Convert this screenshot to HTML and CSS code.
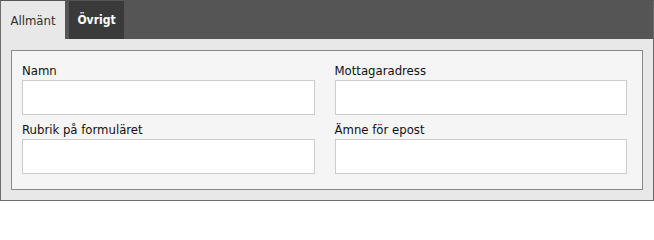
FILE: index.html
```html
<!DOCTYPE html>
<html lang="sv">
<head>
<meta charset="utf-8">
<title>Formulär</title>
<link rel="stylesheet" href="styles.css">
</head>
<body>
<div class="frame">
  <div class="tabbar">
    <div class="tab tab-active">Allmänt</div>
    <div class="tab tab-dark">Övrigt</div>
  </div>
  <div class="panel">
    <div class="fieldset">
      <div class="field">
        <label class="label">Namn</label>
        <input class="input" type="text">
      </div>
      <div class="field">
        <label class="label">Mottagaradress</label>
        <input class="input" type="text">
      </div>
      <div class="field">
        <label class="label">Rubrik på formuläret</label>
        <input class="input" type="text">
      </div>
      <div class="field">
        <label class="label">Ämne för epost</label>
        <input class="input" type="text">
      </div>
    </div>
  </div>
</div>
</body>
</html>
```

FILE: styles.css
```css
html, body {
  margin: 0;
  padding: 0;
  background: #ffffff;
}

.frame {
  box-sizing: border-box;
  width: 654px;
  height: 201px;
  border: 1px solid #6c6c6c;
  border-top-color: #555555;
  display: flex;
  flex-direction: column;
  font-family: "DejaVu Sans Condensed", "Liberation Sans", sans-serif;
  font-size: 13px;
  color: #111111;
}

.tabbar {
  height: 38px;
  background: #555555;
  display: flex;
  gap: 4px;
  flex: none;
}

.tab {
  height: 38px;
  display: flex;
  align-items: center;
  justify-content: center;
  box-sizing: border-box;
  padding: 0 6px;
  font-size: 13px;
  white-space: nowrap;
}

.tab-active {
  width: 64px;
  background: #e8e8e8;
  color: #2e2e2e;
}

.tab-dark {
  width: 55px;
  background: #3a3a3a;
  color: #ffffff;
  font-weight: bold;
  font-size: 12px;
}

.panel {
  flex: 1;
  background: #e8e8e8;
  padding: 11px 10px 10px 10px;
  display: flex;
}

.fieldset {
  flex: 1;
  box-sizing: border-box;
  border: 1px solid #8a8a8a;
  background: #f5f5f5;
  padding: 12px 15px 15px 10px;
  display: grid;
  grid-template-columns: 1fr 1fr;
  column-gap: 20px;
  row-gap: 7px;
  align-content: start;
}

.field {
  display: flex;
  flex-direction: column;
}

.label {
  line-height: 16px;
  margin-bottom: 1px;
  color: #111111;
}

.input {
  box-sizing: border-box;
  height: 35px;
  width: 100%;
  margin: 0;
  border: 1px solid #cccccc;
  background: #ffffff;
  padding: 0 6px;
  font-family: inherit;
  font-size: 13px;
  outline: none;
}
```
